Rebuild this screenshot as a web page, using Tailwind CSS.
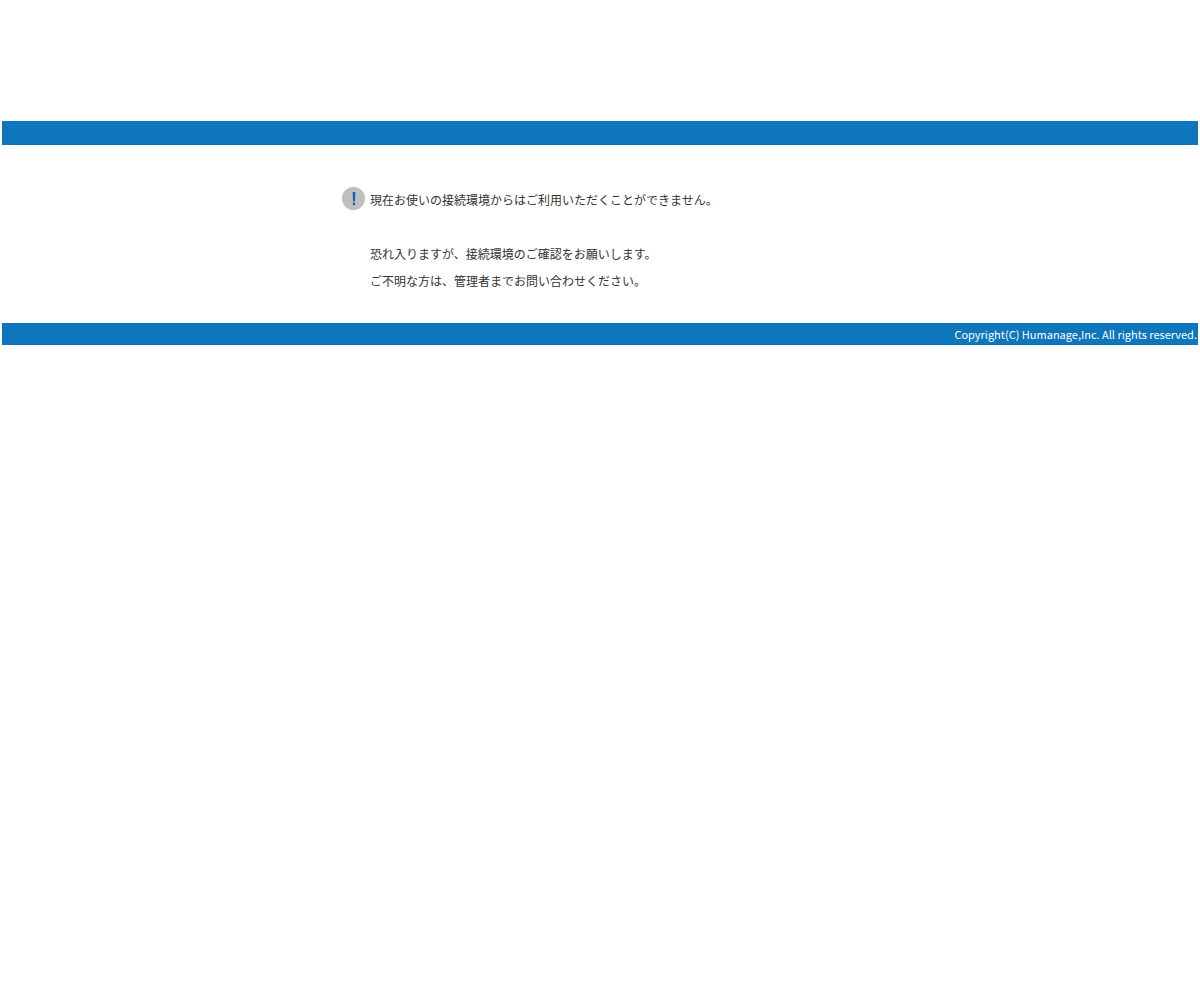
<!DOCTYPE html>
<html lang="ja">
<head>
  <meta charset="UTF-8">
  <title>接続エラー</title>
  <script src="https://cdn.jsdelivr.net/npm/@tailwindcss/browser@4"></script>
</head>
<body class="bg-white text-[#333] text-[12px] font-['Noto_Sans_CJK_JP',sans-serif]">
  <div class="mx-[2px] pt-[121px]">
    <!-- ヘッダー -->
    <div class="h-[24px] bg-[#0e76bc]"></div>

    <!-- メッセージ -->
    <div class="ml-[340px] h-[178px] pt-[42px]">
      <div class="flex items-start h-[24px]">
        <svg class="w-[23px] h-[23px] mr-[5px]" viewBox="0 0 23 23">
          <circle cx="11.5" cy="11.5" r="11.5" fill="#bfbfbf"/>
          <path d="M10.6 5h2.8l-.4 9.5h-2z" fill="#1268b8"/>
          <rect x="10.9" y="15.6" width="2.2" height="2.6" fill="#1268b8"/>
        </svg>
        <p class="mt-[4px]">現在お使いの接続環境からはご利用いただくことができません。</p>
      </div>
      <div class="ml-[28px] mt-[29px] leading-[27px]">
        <p>恐れ入りますが、接続環境のご確認をお願いします。</p>
        <p>ご不明な方は、管理者までお問い合わせください。</p>
      </div>
    </div>

    <!-- フッター -->
    <div class="h-[22px] bg-[#0e76bc] text-white text-[11px] text-right leading-[22px] pr-px">Copyright(C) Humanage,Inc. All rights reserved.</div>
  </div>
</body>
</html>
